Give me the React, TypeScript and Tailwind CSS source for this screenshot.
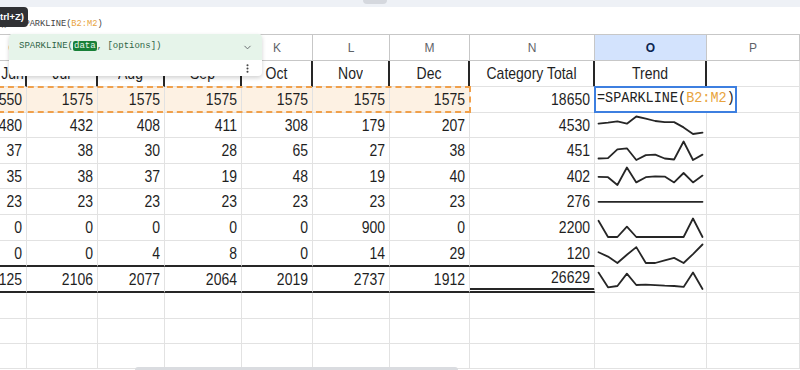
import React from 'react'
import { ChevronDown, EllipsisVertical } from 'lucide-react'

// visible sheet columns G..P (Jun is scrolled half out of view)
const COLS = [
  { letter: 'G', w: 'w-[27px]' },
  { letter: 'H', w: 'w-[71px]' },
  { letter: 'I', w: 'w-[67px]' },
  { letter: 'J', w: 'w-[77px]' },
  { letter: 'K', w: 'w-[71px]' },
  { letter: 'L', w: 'w-[77px]' },
  { letter: 'M', w: 'w-[80px]' },
  { letter: 'N', w: 'w-[125px]' },
  { letter: 'O', w: 'w-[112px]' },
  { letter: 'P', w: 'w-[93px]' },
]

const HEADERS = ['Jun', 'Jul', 'Aug', 'Sep', 'Oct', 'Nov', 'Dec', 'Category Total', 'Trend', '']

// Jan..Dec per category
const DATA: { months: number[]; h: number; hc: string }[] = [
  { months: [1450, 1500, 1555, 1645, 1500, 1550, 1575, 1575, 1575, 1575, 1575, 1575], h: 26, hc: 'h-[26px]' },
  { months: [380, 400, 425, 380, 520, 480, 432, 408, 411, 308, 179, 207], h: 25, hc: 'h-[25px]' },
  { months: [30, 31, 49, 51, 27, 37, 38, 30, 28, 65, 27, 38], h: 26, hc: 'h-[26px]' },
  { months: [36, 35, 11, 65, 19, 35, 38, 37, 19, 48, 19, 40], h: 25, hc: 'h-[25px]' },
  { months: Array(12).fill(23), h: 26, hc: 'h-[26px]' },
  { months: [795, 0, 0, 505, 0, 0, 0, 0, 0, 0, 900, 0], h: 26, hc: 'h-[26px]' },
  { months: [17, 10, 0, 13, 25, 0, 0, 4, 8, 0, 14, 29], h: 26, hc: 'h-[26px]' },
]

const TOTALS = DATA[0].months.map((_, i) => DATA.reduce((s, r) => s + r.months[i], 0))

const EMPTY_ROWS = ['h-[26px]', 'h-[25px]', 'h-[25px]']

const sum = (a: number[]) => a.reduce((s, v) => s + v, 0)

function Sparkline({ data, h, padTop = 3.5 }: { data: number[]; h: number; padTop?: number }) {
  const min = Math.min(...data)
  const max = Math.max(...data)
  const x0 = 3.5
  const x1 = 107.5
  const top = padTop
  const bot = h - 4
  const pts = data
    .map((v, i) => {
      const x = x0 + (i * (x1 - x0)) / (data.length - 1)
      const y = max === min ? (top + bot) / 2 : bot - ((v - min) / (max - min)) * (bot - top)
      return `${x.toFixed(1)},${y.toFixed(1)}`
    })
    .join(' ')
  return (
    <svg width={111} height={h - 1} className="block">
      <polyline points={pts} fill="none" stroke="#262626" strokeWidth={1.8} strokeLinejoin="round" strokeLinecap="round" />
    </svg>
  )
}

function Num({ v }: { v: number | string }) {
  return <span className="inline-block scale-y-[1.2]">{v}</span>
}

export default function App() {
  return (
    <div className="relative w-[800px] h-[370px] overflow-hidden bg-white text-[#1f1f1f] font-['Liberation_Sans',Arial,sans-serif]">
      {/* toolbar edge */}
      <div className="h-[7px] bg-[#eef1f6] flex">
        <div className="ml-[363px] w-[24px] h-[4px] rounded-b bg-[#d5d8de]" />
      </div>

      {/* formula bar */}
      <div className="h-[27px] flex items-center pt-[8px] font-['Liberation_Mono',monospace] text-[8.7px] text-[#444]">
        <span className="w-[14px] pl-[2px] italic font-['Liberation_Serif',serif] text-[10px] text-[#777]">x</span>
        <span>
          =SPARKLINE(<span className="text-[#e8a33c]">B2:M2</span>)
        </span>
      </div>

      {/* grid */}
      <div className="relative border-t border-[#c7c7c7]">
        <div className="flex h-[26px]">
          {COLS.map((c) => (
            <div
              key={c.letter}
              className={`${c.w} shrink-0 flex items-center justify-center border-r border-b border-[#c7c7c7] text-[12px] ${
                c.letter === 'O' ? 'bg-[#d3e3fd] text-[#0b2550] font-bold' : 'text-[#5f6368]'
              }`}
            >
              {c.letter}
            </div>
          ))}
        </div>

        <div className="flex h-[26px]">
          {COLS.map((c, i) => (
            <div
              key={c.letter}
              className={`${c.w} shrink-0 flex items-center justify-center border-b border-b-[#e2e2e2] text-[14px] ${
                i < 9 ? 'border-r-2 border-r-[#262626]' : 'border-r border-r-[#e2e2e2]'
              }`}
            >
              <Num v={HEADERS[i]} />
            </div>
          ))}
        </div>

        {DATA.map((r, ri) => {
          const cells = [...r.months.slice(5), sum(r.months)]
          const last = ri === DATA.length - 1
          return (
            <div key={ri} className={`flex ${r.hc}`}>
              {cells.map((v, ci) => (
                <div
                  key={ci}
                  className={`${COLS[ci].w} shrink-0 flex items-center justify-end pr-[4px] border-r border-r-[#e2e2e2] text-[14px] ${
                    last ? 'border-b-2 border-b-[#262626]' : 'border-b border-b-[#e2e2e2]'
                  } ${ri === 0 && ci < 7 ? 'bg-[#fdf1e3]' : ''}`}
                >
                  <Num v={v} />
                </div>
              ))}
              <div className="w-[112px] shrink-0 border-r border-b border-[#e2e2e2]">
                {ri > 0 && <Sparkline data={r.months} h={r.h} />}
              </div>
              <div className="w-[93px] shrink-0 border-r border-b border-[#e2e2e2]" />
            </div>
          )
        })}

        {/* totals */}
        <div className="flex h-[26px]">
          {[...TOTALS.slice(5), sum(TOTALS)].map((v, ci) => (
            <div
              key={ci}
              className={`${COLS[ci].w} shrink-0 flex items-center justify-end pr-[4px] border-r border-r-[#e2e2e2] text-[14px] ${
                ci === 7 ? 'border-b-[5px] border-double border-b-[#262626]' : 'border-b-2 border-b-[#262626]'
              }`}
            >
              <Num v={v} />
            </div>
          ))}
          <div className="w-[112px] shrink-0 border-r border-b border-[#e2e2e2]">
            <Sparkline data={TOTALS} h={26} padTop={5.5} />
          </div>
          <div className="w-[93px] shrink-0 border-r border-b border-[#e2e2e2]" />
        </div>

        {EMPTY_ROWS.map((hc, ri) => (
          <div key={ri} className={`flex ${hc}`}>
            {COLS.map((c) => (
              <div key={c.letter} className={`${c.w} shrink-0 border-r border-b border-[#e2e2e2]`} />
            ))}
          </div>
        ))}

        {/* copied range B2:M2 */}
        <div className="absolute left-[-2px] top-[51px] w-[473px] h-[27px] border-2 border-dashed border-[#f0a04b]" />

        {/* in-cell formula editor */}
        <div className="absolute left-[594px] top-[51px] w-[143px] h-[27px] border-2 border-[#3d7fe0] bg-white flex items-center pl-[1px] font-['Liberation_Mono',monospace] text-[13.5px] text-[#222]">
          <span className="inline-block scale-y-[1.12]">
            =SPARKLINE(<span className="text-[#e8a33c]">B2:M2</span>)
          </span>
        </div>
      </div>

      {/* formula hint popup */}
      <div className="absolute left-[9px] top-[34px] w-[253px] rounded-[4px] bg-white shadow-[0_2px_4px_rgba(0,0,0,0.18)]">
        <div className="h-[26px] rounded-t-[4px] bg-[#e6f4ea] flex items-center pl-[10px] pr-[6px] font-['Liberation_Mono',monospace] text-[9px] text-[#2f6446]">
          <span>
            SPARKLINE(<span className="bg-[#188038] text-[#e6f4ea] rounded-[2px] px-[1px]">data</span>, [options])
          </span>
          <ChevronDown className="ml-auto mr-[3px]" size={11} color="#5f6368" strokeWidth={2} />
        </div>
        <div className="h-[16px] flex items-center justify-end pr-[9px]">
          <EllipsisVertical size={11} color="#444" strokeWidth={2.5} />
        </div>
      </div>

      {/* undo tooltip, mostly scrolled off the left */}
      <div className="absolute top-[7px] right-[772px] h-[20px] rounded-[4px] bg-[#303134] px-[4px] flex items-center whitespace-nowrap text-[9.5px] font-bold text-white">
        Undo (Ctrl+Z)
      </div>

      {/* horizontal scrollbar thumb */}
      <div className="absolute bottom-0 left-[135px] w-[323px] h-[3px] rounded-t bg-[#dadce0]" />
    </div>
  )
}
